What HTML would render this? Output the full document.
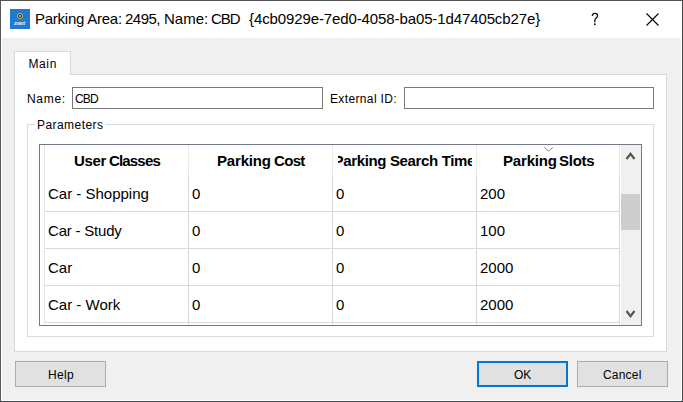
<!DOCTYPE html>
<html><head><meta charset="utf-8">
<style>
*{margin:0;padding:0;box-sizing:border-box}
html,body{width:683px;height:402px;overflow:hidden;background:#f0f0f0}
body{position:relative;font-family:"Liberation Sans",sans-serif;color:#000}
.a{position:absolute}
.t{position:absolute;white-space:nowrap;line-height:1}
#frame{left:0;top:0;width:683px;height:402px;border:1px solid #525252;border-bottom-color:#3e4d5c;border-left-color:#585858;border-right-color:#474747}
#titlebar{left:1px;top:1px;width:681px;height:37px;background:#fff}
#inner{left:1px;top:38px;width:681px;height:363px;background:#f0f0f0;border-left:1px solid #fff;border-right:1px solid #fff;border-bottom:1px solid #fff}
.icon{left:10px;top:9px;width:20px;height:20px;background:#1f7ad4}
.tab{left:14px;top:51px;width:57px;height:24px;background:#fff;border:1px solid #d9d9d9;border-bottom:none}
.panel{left:14px;top:74px;width:653px;height:278px;background:#fff;border:1px solid #d9d9d9}
.tabcover{left:15px;top:74px;width:55px;height:1px;background:#fff}
.inp{background:#fff;border:1px solid #7a7a7a}
.grp{left:27px;top:124px;width:627px;height:213px;border:1px solid #dcdcdc}
.table{left:39px;top:144px;width:603px;height:182px;border:1px solid #737985;background:#fff;overflow:hidden}
.vl{position:absolute;width:1px}
.hl{position:absolute;height:1px}
.hdr{font-weight:bold;font-size:15px}
.cell{font-size:15px}
.btn{background:#e1e1e1;border:1px solid #adadad}
</style></head><body>
<div class="a" id="titlebar"></div>
<div class="a" id="inner"></div>
<div class="a" id="frame"></div>

<!-- icon -->
<div class="a icon">
  <div class="a" style="left:6.8px;top:3.6px;width:6.4px;height:6.4px;border-radius:50%;background:#142850;border:1.6px solid #f0c010"></div>
  <div class="a" style="left:9.2px;top:5.6px;width:2px;height:2px;border-radius:1px;background:#b8c4d8"></div>
  <div class="t" style="left:4px;top:10.8px;font-size:6px;font-weight:bold;font-style:italic;color:#e8f0fa;letter-spacing:-0.3px;transform:scaleX(0.78);transform-origin:0 0">znext</div>
</div>
<div class="t" style="left:35px;top:11px;font-size:15px;letter-spacing:-0.25px">Parking Area:</div>
<div class="t" style="left:125px;top:11px;font-size:15px;letter-spacing:-0.5px">2495,</div>
<div class="t" style="left:164px;top:11px;font-size:15px">Name:</div>
<div class="t" style="left:211px;top:11px;font-size:15px;letter-spacing:-1px">CBD</div>
<div class="t" style="left:249px;top:11px;font-size:15px;letter-spacing:-0.11px">{4cb0929e-7ed0-4058-ba05-1d47405cb27e}</div>
<svg class="a" style="left:0;top:0" width="683" height="40"><path d="M646.5 13.5 L658.5 25.5 M658.5 13.5 L646.5 25.5" stroke="#000" stroke-width="1.1" fill="none"/>
<path d="M592.3 16 C592.4 14 593.6 13.3 594.9 13.3 C596.6 13.3 597.6 14.4 597.6 15.8 C597.6 17.8 595 18.3 594.8 20.5 L594.8 22.2" stroke="#111" stroke-width="1.35" fill="none"/>
<circle cx="594.8" cy="24.3" r="0.95" fill="#111"/></svg>

<!-- tab -->
<div class="a panel"></div>
<div class="a tab"></div>
<div class="t" style="left:28.5px;top:58px;font-size:12px;letter-spacing:0.6px">Main</div>

<div class="t" style="left:27px;top:93px;font-size:12px;letter-spacing:0.7px">Name:</div>
<div class="a inp" style="left:72px;top:87px;width:251px;height:22px"></div>
<div class="t" style="left:75px;top:93px;font-size:12px;letter-spacing:-0.8px">CBD</div>
<div class="t" style="left:330px;top:93px;font-size:12px;letter-spacing:0.36px">External ID:</div>
<div class="a inp" style="left:404px;top:87px;width:250px;height:22px"></div>

<!-- group -->
<div class="a grp"></div>
<div class="a" style="left:35px;top:118px;width:71px;height:12px;background:#fff"></div>
<div class="t" style="left:37px;top:119px;font-size:12px;letter-spacing:0.44px">Parameters</div>

<!-- table -->
<div class="a table">
  <!-- inner coords: x-40, y-145 -->
  <div class="vl" style="left:4px;top:0;height:180px;background:#e6e6e6"></div>
  <!-- header col lines -->
  <div class="vl" style="left:148px;top:0;height:30px;background:#ebebeb"></div>
  <div class="vl" style="left:292px;top:0;height:30px;background:#ebebeb"></div>
  <div class="vl" style="left:436px;top:0;height:30px;background:#ebebeb"></div>
  <!-- body col lines -->
  <div class="vl" style="left:148px;top:30px;height:150px;background:#d9d9d9"></div>
  <div class="vl" style="left:292px;top:30px;height:150px;background:#d9d9d9"></div>
  <div class="vl" style="left:436px;top:30px;height:150px;background:#d9d9d9"></div>
  <!-- row lines -->
  <div class="hl" style="left:5px;top:66px;width:575px;background:#d9d9d9"></div>
  <div class="hl" style="left:5px;top:103px;width:575px;background:#d9d9d9"></div>
  <div class="hl" style="left:5px;top:140px;width:575px;background:#d9d9d9"></div>
  <div class="hl" style="left:5px;top:177px;width:575px;background:#d9d9d9"></div>

  <!-- headers -->
  <div class="t hdr" style="left:34px;top:8px;letter-spacing:-0.33px">User</div><div class="t hdr" style="left:69px;top:8px;letter-spacing:-0.83px">Classes</div>
  <div class="t hdr" style="left:177px;top:8px;letter-spacing:-0.17px">Parking</div><div class="t hdr" style="left:234px;top:8px;letter-spacing:-0.67px">Cost</div>
  <div class="a" style="left:298px;top:0;width:134px;height:30px;overflow:hidden">
    <div class="t hdr" style="left:-4.5px;top:8px;letter-spacing:-0.35px">Parking Search Time</div>
  </div>
  <div class="t hdr" style="left:463px;top:8px;letter-spacing:-0.17px">Parking</div><div class="t hdr" style="left:519px;top:8px;letter-spacing:-0.25px">Slots</div>
  <svg class="a" style="left:504px;top:2px" width="11" height="6"><path d="M0.3 0.3 L4.6 4.1 L8.9 0.3" stroke="#8a8a8a" stroke-width="1" fill="none"/></svg>

  <!-- rows -->
  <div class="t cell" style="left:8px;top:41px">Car - Shopping</div>
  <div class="t cell" style="left:152px;top:41px">0</div>
  <div class="t cell" style="left:296px;top:41px">0</div>
  <div class="t cell" style="left:440px;top:41px">200</div>

  <div class="t cell" style="left:8px;top:78px;letter-spacing:-0.2px">Car - Study</div>
  <div class="t cell" style="left:152px;top:78px">0</div>
  <div class="t cell" style="left:296px;top:78px">0</div>
  <div class="t cell" style="left:440px;top:78px">100</div>

  <div class="t cell" style="left:8px;top:115px">Car</div>
  <div class="t cell" style="left:152px;top:115px">0</div>
  <div class="t cell" style="left:296px;top:115px">0</div>
  <div class="t cell" style="left:440px;top:115px">2000</div>

  <div class="t cell" style="left:8px;top:152px">Car - Work</div>
  <div class="t cell" style="left:152px;top:152px">0</div>
  <div class="t cell" style="left:296px;top:152px">0</div>
  <div class="t cell" style="left:440px;top:152px">2000</div>

  <!-- scrollbar -->
  <div class="vl" style="left:579px;top:0;height:30px;background:#ebebeb"></div>
  <div class="vl" style="left:579px;top:30px;height:150px;background:#d9d9d9"></div>
  <div class="vl" style="left:580px;top:0;height:180px;background:#fff"></div>
  <div class="a" style="left:581px;top:0;width:20px;height:180px;background:#f0f0f0"></div>
  <div class="a" style="left:581px;top:49px;width:19px;height:36px;background:#cdcdcd"></div>
  <svg class="a" style="left:581px;top:0" width="20" height="180">
    <path d="M5.5 14 L9.5 8.8 L13.5 14" stroke="#555" stroke-width="2.2" fill="none"/>
    <path d="M5.5 166 L9.5 171.2 L13.5 166" stroke="#555" stroke-width="2.2" fill="none"/>
  </svg>
</div>

<!-- buttons -->
<div class="a btn" style="left:15px;top:361px;width:91px;height:26px"></div>
<div class="t" style="left:48px;top:369px;font-size:12px;letter-spacing:0.3px">Help</div>
<div class="a btn" style="left:477px;top:361px;width:91px;height:26px;border:2px solid #0078d7"></div>
<div class="t" style="left:514px;top:369px;font-size:12px">OK</div>
<div class="a btn" style="left:577px;top:361px;width:91px;height:26px"></div>
<div class="t" style="left:603px;top:369px;font-size:12px;letter-spacing:0.2px">Cancel</div>
</body></html>
